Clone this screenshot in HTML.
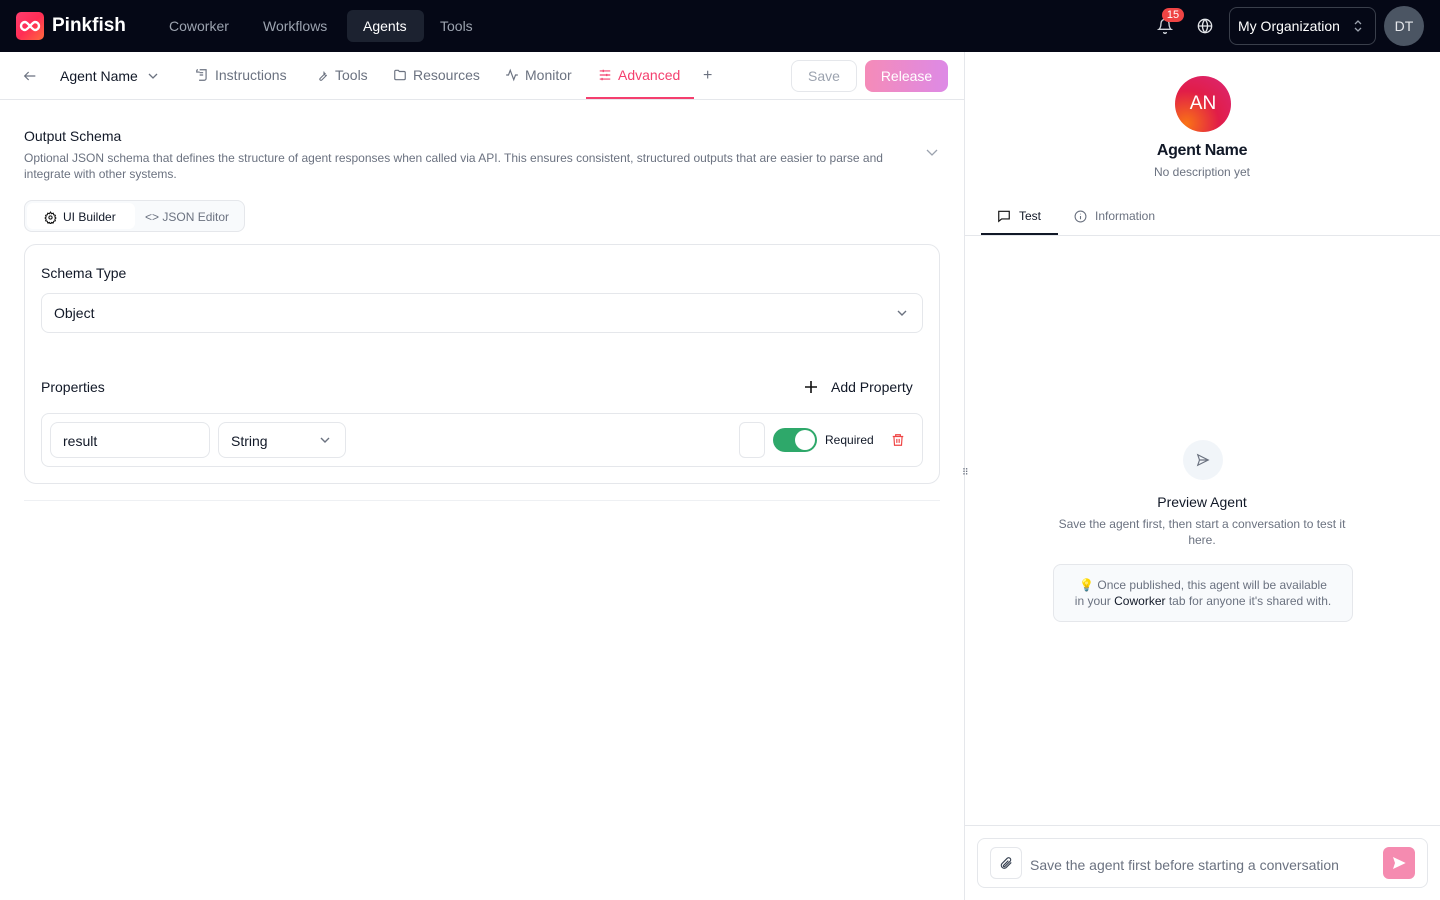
<!DOCTYPE html>
<html><head><meta charset="utf-8"><style>
*{box-sizing:border-box;margin:0;padding:0}
body{width:1440px;height:900px;overflow:hidden;background:#fff;font-family:"Liberation Sans",sans-serif;color:#111827;position:relative}
.a{position:absolute;white-space:nowrap}
svg{display:block}
.top{position:absolute;left:0;top:0;width:1440px;height:52px;background:#050816}
.nav{color:#9ca3af;font-size:14px;top:18px}
.tab{font-size:14px;color:#6b7280;top:67px;display:flex;align-items:center;gap:6px}
</style></head><body>
<div class="top"></div>
<div class="a" style="left:16px;top:12px;width:28px;height:28px;border-radius:5px;background:linear-gradient(135deg,#ff3d6e,#ff2d55 50%,#ff6a3d)"></div>
<svg class="a" style="left:19px;top:19px" width="22" height="14" viewBox="0 0 22 14"><path d="M6 3a4 4 0 1 0 0 8c3 0 7-8 10-8a4 4 0 1 1 0 8c-3 0-7-8-10-8z" fill="none" stroke="#fff" stroke-width="2.4"/></svg>
<div class="a" style="left:52px;top:15px;color:#fff;font-size:19px;font-weight:bold">Pinkfish</div>
<div class="a nav" style="left:169px">Coworker</div>
<div class="a nav" style="left:263px">Workflows</div>
<div class="a" style="left:347px;top:10px;width:77px;height:32px;border-radius:6px;background:#1c2230"></div>
<div class="a nav" style="left:363px;color:#fff">Agents</div>
<div class="a nav" style="left:440px">Tools</div>
<svg class="a" style="left:1157px;top:18px" width="16" height="16" viewBox="0 0 24 24" fill="none" stroke="#d1d5db" stroke-width="2"><path d="M6 8a6 6 0 0 1 12 0c0 7 3 9 3 9H3s3-2 3-9M10 21a2 2 0 0 0 4 0"/></svg>
<div class="a" style="left:1162px;top:8px;width:22px;height:14px;border-radius:7px;background:#ef4444;color:#fff;font-size:11px;text-align:center;line-height:14px">15</div>
<svg class="a" style="left:1197px;top:18px" width="16" height="16" viewBox="0 0 24 24" fill="none" stroke="#e5e7eb" stroke-width="2"><circle cx="12" cy="12" r="10"/><path d="M2 12h20M12 2a15 15 0 0 1 0 20M12 2a15 15 0 0 0 0 20"/></svg>
<div class="a" style="left:1229px;top:7px;width:147px;height:38px;border:1px solid #3a3f4b;border-radius:8px"></div>
<div class="a" style="left:1238px;top:18px;color:#fff;font-size:14px">My Organization</div>
<svg class="a" style="left:1353px;top:19px" width="10" height="14" viewBox="0 0 10 14" fill="none" stroke="#9ca3af" stroke-width="1.3"><path d="M2 5l3-3 3 3M2 9l3 3 3-3"/></svg>
<div class="a" style="left:1384px;top:6px;width:40px;height:40px;border-radius:50%;background:#4b5563;color:#e5e7eb;font-size:14px;text-align:center;line-height:40px">DT</div>

<div class="a" style="left:0;top:99px;width:964px;height:1px;background:#e5e7eb"></div>
<div class="a" style="left:964px;top:52px;width:1px;height:848px;background:#e5e7eb"></div>
<svg class="a" style="left:22px;top:68px" width="16" height="16" viewBox="0 0 24 24" fill="none" stroke="#6b7280" stroke-width="1.8"><path d="M20 12H4M10 6l-6 6 6 6"/></svg>
<div class="a" style="left:60px;top:68px;font-size:14px">Agent Name</div>
<svg class="a" style="left:147px;top:71px" width="12" height="10" viewBox="0 0 12 10" fill="none" stroke="#6b7280" stroke-width="1.3"><path d="M2 3l4 4 4-4"/></svg>
<div class="a tab" style="left:195px"><svg width="14" height="14" viewBox="0 0 24 24" fill="none" stroke="#6b7280" stroke-width="2"><path d="M8 3h11v15a3 3 0 0 1-3 3H7M5 3a2 2 0 0 0-2 2v2h5M8 8h6M8 12h6"/></svg>Instructions</div>
<div class="a tab" style="left:316px"><svg width="13" height="13" viewBox="0 0 24 24" fill="none" stroke="#6b7280" stroke-width="2"><path d="M14.7 6.3a4 4 0 0 0 5 5l-9 9a2 2 0 0 1-3-3l9-9a4 4 0 0 1-2-2z"/></svg>Tools</div>
<div class="a tab" style="left:393px"><svg width="14" height="14" viewBox="0 0 24 24" fill="none" stroke="#6b7280" stroke-width="2"><path d="M3 6a2 2 0 0 1 2-2h4l2 2h8a2 2 0 0 1 2 2v10a2 2 0 0 1-2 2H5a2 2 0 0 1-2-2z"/></svg>Resources</div>
<div class="a tab" style="left:505px"><svg width="14" height="14" viewBox="0 0 24 24" fill="none" stroke="#6b7280" stroke-width="2"><path d="M2 12h4l3-8 6 16 3-8h4"/></svg>Monitor</div>
<div class="a tab" style="left:598px;color:#f43f6e"><svg width="14" height="14" viewBox="0 0 24 24" fill="none" stroke="#f43f6e" stroke-width="2"><path d="M3 5h18M3 12h18M3 19h18M9 3v4M15 10v4M7 17v4"/></svg>Advanced</div>
<div class="a" style="left:586px;top:97px;width:108px;height:2px;background:#f43f6e"></div>
<div class="a" style="left:703px;top:67px;color:#6b7280;font-size:16px">+</div>
<div class="a" style="left:791px;top:60px;width:66px;height:32px;border:1px solid #e5e7eb;border-radius:8px;color:#9ca3af;font-size:14px;text-align:center;line-height:30px">Save</div>
<div class="a" style="left:865px;top:60px;width:83px;height:32px;border-radius:8px;background:linear-gradient(90deg,#f58bb8,#dd8ae6);color:#fff;font-size:14px;text-align:center;line-height:32px">Release</div>

<div class="a" style="left:24px;top:128px;font-size:14px">Output Schema</div>
<div class="a" style="left:24px;top:150px;font-size:12px;color:#6b7280;line-height:16px">Optional JSON schema that defines the structure of agent responses when called via API. This ensures consistent, structured outputs that are easier to parse and<br>integrate with other systems.</div>
<svg class="a" style="left:925px;top:148px" width="14" height="10" viewBox="0 0 14 10" fill="none" stroke="#9ca3af" stroke-width="1.3"><path d="M2 2l5 5 5-5"/></svg>

<div class="a" style="left:24px;top:200px;width:221px;height:32px;border:1px solid #e5e7eb;border-radius:8px;background:#f8fafc"></div>
<div class="a" style="left:27px;top:203px;width:108px;height:26px;border-radius:6px;background:#fff"></div>
<div class="a" style="left:44px;top:210px;font-size:12px;display:flex;gap:6px;align-items:center"><svg width="13" height="13" viewBox="0 0 24 24" fill="none" stroke="#111" stroke-width="2"><circle cx="12" cy="12" r="3"/><path d="M12 2l2 3 3-1 1 3 3 1-1 3 2 2-2 2 1 3-3 1-1 3-3-1-2 3-2-3-3 1-1-3-3-1 1-3-2-2 2-2-1-3 3-1 1-3 3 1z"/></svg>UI Builder</div>
<div class="a" style="left:145px;top:210px;font-size:12px;color:#6b7280">&lt;&gt; JSON Editor</div>

<div class="a" style="left:24px;top:244px;width:916px;height:240px;border:1px solid #e5e7eb;border-radius:12px"></div>
<div class="a" style="left:41px;top:265px;font-size:14px">Schema Type</div>
<div class="a" style="left:41px;top:293px;width:882px;height:40px;border:1px solid #e5e7eb;border-radius:8px"></div>
<div class="a" style="left:54px;top:305px;font-size:14px">Object</div>
<svg class="a" style="left:895px;top:308px" width="14" height="10" viewBox="0 0 14 10" fill="none" stroke="#6b7280" stroke-width="1.4"><path d="M3 3l4 4 4-4"/></svg>
<div class="a" style="left:41px;top:379px;font-size:14px">Properties</div>
<svg class="a" style="left:804px;top:380px" width="14" height="14" viewBox="0 0 14 14" fill="none" stroke="#111" stroke-width="1.6"><path d="M7 1v12M1 7h12"/></svg>
<div class="a" style="left:831px;top:379px;font-size:14px">Add Property</div>
<div class="a" style="left:41px;top:413px;width:882px;height:54px;border:1px solid #e5e7eb;border-radius:8px"></div>
<div class="a" style="left:50px;top:422px;width:160px;height:36px;border:1px solid #e5e7eb;border-radius:8px;font-size:14px;padding:10px 12px">result</div>
<div class="a" style="left:218px;top:422px;width:128px;height:36px;border:1px solid #e5e7eb;border-radius:8px;font-size:14px;padding:10px 12px">String</div>
<svg class="a" style="left:318px;top:435px" width="14" height="10" viewBox="0 0 14 10" fill="none" stroke="#6b7280" stroke-width="1.4"><path d="M3 3l4 4 4-4"/></svg>
<div class="a" style="left:739px;top:422px;width:26px;height:36px;border:1px solid #e5e7eb;border-radius:6px"></div>
<div class="a" style="left:773px;top:428px;width:44px;height:24px;border-radius:12px;background:#2ea86a"></div>
<div class="a" style="left:795px;top:430px;width:20px;height:20px;border-radius:50%;background:#fff"></div>
<div class="a" style="left:825px;top:433px;font-size:12px">Required</div>
<svg class="a" style="left:891px;top:432px" width="14" height="16" viewBox="0 0 24 24" fill="none" stroke="#ef4444" stroke-width="2"><path d="M3 6h18M8 6V3h8v3M5 6l1 15h12l1-15M10 10v7M14 10v7"/></svg>
<div class="a" style="left:24px;top:500px;width:916px;height:1px;background:#eef0f3"></div>

<div class="a" style="left:962px;top:470px;color:#6b7280;font-size:9px;line-height:4px">⠿</div>

<div class="a" style="left:1175px;top:76px;width:56px;height:56px;border-radius:50%;background:radial-gradient(circle at 20% 85%,#f97316,#e11d48 50%,#db2777);color:#fff;font-size:19px;text-align:center;line-height:56px">AN</div>
<div class="a" style="left:1082px;top:142px;width:240px;text-align:center;font-size:16px;font-weight:bold;letter-spacing:-0.3px">Agent Name</div>
<div class="a" style="left:1082px;top:165px;width:240px;text-align:center;font-size:12px;color:#6b7280">No description yet</div>
<div class="a" style="left:997px;top:209px;font-size:12px;display:flex;gap:8px;align-items:center"><svg width="14" height="14" viewBox="0 0 24 24" fill="none" stroke="#111" stroke-width="2"><path d="M3 4h18v13H8l-5 4z"/></svg>Test</div>
<div class="a" style="left:981px;top:233px;width:77px;height:2px;background:#111827"></div>
<div class="a" style="left:1074px;top:209px;font-size:12px;color:#6b7280;display:flex;gap:8px;align-items:center"><svg width="13" height="13" viewBox="0 0 24 24" fill="none" stroke="#6b7280" stroke-width="2"><circle cx="12" cy="12" r="10"/><path d="M12 11v6M12 7v1"/></svg>Information</div>
<div class="a" style="left:965px;top:235px;width:475px;height:1px;background:#e5e7eb"></div>
<div class="a" style="left:1183px;top:440px;width:40px;height:40px;border-radius:50%;background:#f1f5f9"></div>
<svg class="a" style="left:1196px;top:453px" width="14" height="14" viewBox="0 0 24 24" fill="none" stroke="#6b7280" stroke-width="2"><path d="M3 3l18 9-18 9 3-9zM6 12h15"/></svg>
<div class="a" style="left:1082px;top:494px;width:240px;text-align:center;font-size:14px">Preview Agent</div>
<div class="a" style="left:1052px;top:516px;width:300px;text-align:center;font-size:12px;color:#6b7280;line-height:16px;white-space:normal">Save the agent first, then start a conversation to test it here.</div>
<div class="a" style="left:1053px;top:564px;width:300px;height:58px;border:1px solid #e5e7eb;border-radius:8px;background:#f8fafc;text-align:center;font-size:12px;color:#6b7280;line-height:16px;padding-top:12px">💡 Once published, this agent will be available<br>in your <span style="color:#111827">Coworker</span> tab for anyone it's shared with.</div>
<div class="a" style="left:965px;top:825px;width:475px;height:1px;background:#e5e7eb"></div>
<div class="a" style="left:977px;top:838px;width:451px;height:50px;border:1px solid #e5e7eb;border-radius:8px"></div>
<div class="a" style="left:990px;top:847px;width:32px;height:32px;border:1px solid #e5e7eb;border-radius:6px"></div>
<svg class="a" style="left:999px;top:856px" width="14" height="14" viewBox="0 0 24 24" fill="none" stroke="#374151" stroke-width="2"><path d="M21 11l-9 9a5 5 0 0 1-7-7l9-9a3 3 0 0 1 5 5l-9 9a1 1 0 0 1-2-2l8-8"/></svg>
<div class="a" style="left:1030px;top:857px;font-size:14px;color:#6b7280">Save the agent first before starting a conversation</div>
<div class="a" style="left:1383px;top:847px;width:32px;height:32px;border-radius:6px;background:#f58bb0"></div>
<svg class="a" style="left:1391px;top:855px" width="16" height="16" viewBox="0 0 24 24" fill="#fff"><path d="M3 3l19 9-19 9 3-9z"/></svg>
</body></html>
